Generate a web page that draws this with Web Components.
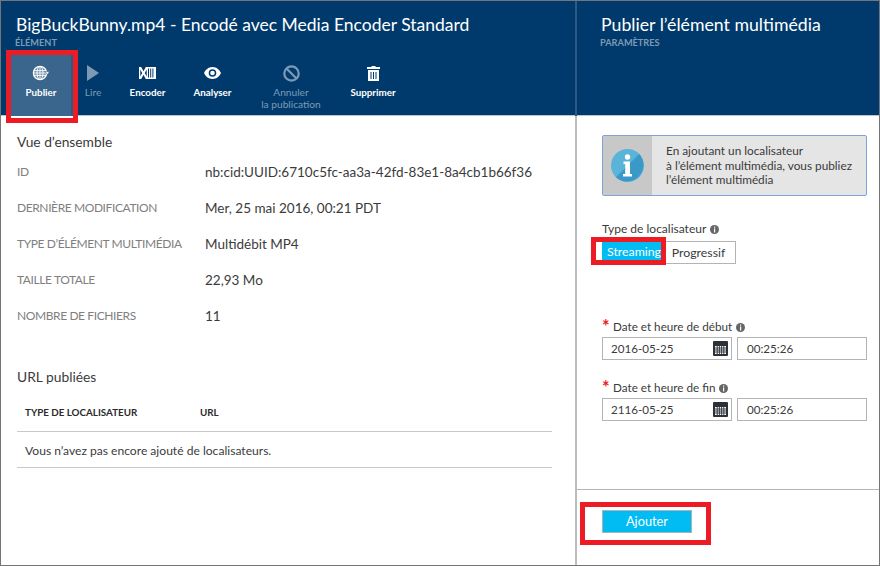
<!DOCTYPE html>
<html lang="fr">
<head>
<meta charset="utf-8">
<title>Publier</title>
<style>
  html, body { margin: 0; padding: 0; background: #fff; }
  body { font-family: Lato, "Noto Sans", sans-serif; color: #333; }
</style>
</head>
<body>
<publish-app>
  <media-blade slot="left" heading="BigBuckBunny.mp4 - Encodé avec Media Encoder Standard" sub="ÉLÉMENT">
    <command-bar slot="commands">
      <command-button label="Publier" icon="globe" active marked></command-button>
      <command-button label="Lire" icon="play" disabled></command-button>
      <command-button label="Encoder" icon="encode"></command-button>
      <command-button label="Analyser" icon="eye"></command-button>
      <command-button label="Annuler|la publication" icon="ban" disabled></command-button>
      <command-button label="Supprimer" icon="trash"></command-button>
    </command-bar>
    <asset-details></asset-details>
  </media-blade>
  <media-blade slot="right" heading="Publier l’élément multimédia" sub="PARAMÈTRES">
    <publish-form></publish-form>
  </media-blade>
</publish-app>

<script>
const ICONS = {
  globe: `<svg width="18" height="18" viewBox="0 0 18 18" fill="none" stroke="#fff" stroke-width=".9">
    <circle cx="8" cy="9" r="6.600" fill="#fff" fill-opacity=".25" stroke-width="1.300"/>
    <ellipse cx="8" cy="9" rx="3" ry="6.600"/><path d="M8 2.400v13.200M2 6.600h12M1.400 9h13.200M2 11.400h12"/>
    <path d="M13.200 7.500h4.300l-2.100 3.200z" fill="#fff" stroke="#3a658c" stroke-width=".6"/></svg>`,
  play: `<svg width="12" height="16" viewBox="0 0 12 16"><path d="M0 0l12 8-12 8z" fill="currentColor"/></svg>`,
  encode: `<svg width="17" height="12" viewBox="0 0 17 12" fill="#fff"><path d="M0 0h2.200l2.300 4.200L6.800 0H9v12H6.800L4.500 7.800 2.200 12H0zM1.300 2.600v6.800L3.200 6zM7.700 2.600L5.800 6l1.900 3.400z" fill-rule="evenodd"/><path d="M9 0h8v1.400H9zM9 10.600h8V12H9zM10 1h1.200v10H10zM12.200 1h1.200v10h-1.200zM14.400 1H17v10h-2.600z"/></svg>`,
  eye: `<svg width="17" height="12" viewBox="0 0 17 12"><path fill-rule="evenodd" fill="#fff" d="M8.500 0C12.600 0 15.700 3 17 6c-1.300 3-4.400 6-8.500 6S1.300 9 0 6c1.300-3 4.400-6 8.500-6zM8.500 2.200A3.800 3.800 0 1 0 8.500 9.800 3.800 3.800 0 1 0 8.500 2.200z"/><circle cx="8.500" cy="6" r="2.300" fill="#fff"/></svg>`,
  ban: `<svg width="17" height="17" viewBox="0 0 17 17" fill="none" stroke="currentColor" stroke-width="2.200"><circle cx="8.500" cy="8.500" r="7.200"/><path d="M3.500 3.500l10 10"/></svg>`,
  trash: `<svg width="13" height="15" viewBox="0 0 13 15"><path fill-rule="evenodd" fill="#fff" d="M4.500 0h4v1H13v2H0V1h4.500zM1 4h11v11H1zM3.500 6v7h1V6zM6 6v7h1V6zM8.500 6v7h1V6z"/></svg>`
};

class CommandButton extends HTMLElement {
  constructor() {
    super();
    const root = this.attachShadow({ mode: 'open' });
    const lines = (this.getAttribute('label') || '').split('|').join('<br>');
    root.innerHTML = `<style>
      :host { display: block; position: relative; box-sizing: border-box; height: 61px; padding: 9px 0 0; text-align: center;
        font-size: 9.800px; line-height: 12px; font-weight: 700; color: #fff; }
      :host([active]) { background: #3a658c; border-right: 2px solid #2c5a85; }
      :host([disabled]) { color: #7d9ab5; font-weight: 400; font-size: 10.200px; }
      .ico { height: 18px; margin-bottom: 4px; display: flex; align-items: center; justify-content: center; }
      .mark { position: absolute; left: -5px; right: -7px; top: -5px; bottom: -7px; border: 5px solid #ed1c24; }
    </style>
    <div class="ico">${ICONS[this.getAttribute('icon')]}</div>
    <div>${lines}</div>
    ${this.hasAttribute('marked') ? '<div class="mark"></div>' : ''}`;
  }
}
customElements.define('command-button', CommandButton);

class CommandBar extends HTMLElement {
  constructor() {
    super();
    this.attachShadow({ mode: 'open' }).innerHTML = `<style>
      :host { display: grid; grid-template-columns: 62px 40px 69px 61px 96px 68px; justify-content: start; margin-left: 10px; white-space: nowrap; }
    </style><slot></slot>`;
  }
}
customElements.define('command-bar', CommandBar);

class MediaBlade extends HTMLElement {
  constructor() {
    super();
    const root = this.attachShadow({ mode: 'open' });
    root.innerHTML = `<style>
      :host { display: flex; flex-direction: column; height: 100%; min-width: 0; }
      header { box-sizing: border-box; height: 115px; flex: none; background: #003a6c; border-bottom: 1px solid #b9c4ce; padding: 13px 0 0; }
      h1 { margin: 0 0 0 15px; font-size: 17.500px; font-weight: 400; line-height: 22px; color: #fff; white-space: nowrap; }
      .sub { margin: 1px 0 6px 14px; font-size: 9.200px; line-height: 12px; font-weight: 700; color: #7d9ab5; }
      :host([slot="right"]) h1 { margin-left: 24px; font-size: 17.700px; }
      :host([slot="right"]) .sub { margin-left: 23px; }
      main { flex: 1; min-height: 0; }
    </style>
    <header>
      <h1>${this.getAttribute('heading')}</h1>
      <div class="sub">${this.getAttribute('sub')}</div>
      <slot name="commands"></slot>
    </header>
    <main><slot></slot></main>`;
  }
}
customElements.define('media-blade', MediaBlade);

class AssetDetails extends HTMLElement {
  constructor() {
    super();
    const rows = [
      ['ID', 'nb:cid:UUID:6710c5fc-aa3a-42fd-83e1-8a4cb1b66f36'],
      ['DERNIÈRE MODIFICATION', 'Mer, 25 mai 2016, 00:21 PDT'],
      ['TYPE D’ÉLÉMENT MULTIMÉDIA', 'Multidébit MP4'],
      ['TAILLE TOTALE', '22,93 Mo'],
      ['NOMBRE DE FICHIERS', '11']
    ];
    this.attachShadow({ mode: 'open' }).innerHTML = `<style>
      :host { display: block; padding: 17px 23px 0 16px; color: #3b3b3b; }
      h2 { margin: 0; font-size: 13.800px; line-height: 18px; font-weight: 400; }
      .props { display: grid; grid-template-columns: 188px 1fr; grid-auto-rows: 36px; align-items: center; margin-top: 2px; margin-bottom: 35px; }
      .k { font-size: 12px; letter-spacing: -.4px; color: #7f7f7f; white-space: nowrap; }
      .v { font-size: 13.500px; white-space: nowrap; padding-top: 2px; }
      .th { display: grid; grid-template-columns: 175px 1fr; height: 43px; padding-top: 4px; align-items: center; padding-left: 8px; margin-top: 3px;
        font-size: 9.800px; font-weight: 700; color: #2b2b2b; border-bottom: 1px solid #c8c8c8; box-sizing: border-box; }
      .empty { height: 36px; display: flex; align-items: center; padding: 1px 0 0 8px; font-size: 12.100px; border-bottom: 1px solid #c8c8c8; box-sizing: border-box; }
    </style>
    <h2>Vue d’ensemble</h2>
    <div class="props">${rows.map(r => `<div class="k">${r[0]}</div><div class="v">${r[1]}</div>`).join('')}</div>
    <h2>URL publiées</h2>
    <div class="th"><span>TYPE DE LOCALISATEUR</span><span>URL</span></div>
    <div class="empty">Vous n’avez pas encore ajouté de localisateurs.</div>`;
  }
}
customElements.define('asset-details', AssetDetails);

class InfoDot extends HTMLElement {
  constructor() {
    super();
    this.attachShadow({ mode: 'open' }).innerHTML = `<style>
      :host { display: inline-block; width: 9px; height: 9px; vertical-align: -0.500px; margin-left: 4px; }
      svg { display: block; }
    </style><svg width="9" height="9" viewBox="0 0 9 9"><circle cx="4.500" cy="4.500" r="4.500" fill="#666"/><rect x="4" y="1.500" width="1.200" height="1.200" fill="#fff"/><rect x="4" y="3.500" width="1.200" height="4" fill="#fff"/></svg>`;
  }
}
customElements.define('info-dot', InfoDot);

class InfoBalloon extends HTMLElement {
  constructor() {
    super();
    this.attachShadow({ mode: 'open' }).innerHTML = `<style>
      :host { display: grid; grid-template-columns: 49px 1fr; box-sizing: border-box; height: 61px; background: #e5e5e5;
        border: 1px solid #7fa3d6; border-radius: 2px; font-size: 11.800px; line-height: 14.500px; color: #3b3b3b; white-space: nowrap; }
      .ico { background: #c8c8c8; display: flex; align-items: center; justify-content: center; }
      .txt { padding: 8px 0 0 14px; }
    </style>
    <div class="ico"><svg width="33" height="33" viewBox="0 0 33 33">
      <circle cx="16.500" cy="16.500" r="16.500" fill="#5ab4d9"/>
      <path d="M28.200 4.900A16.500 16.500 0 0 1 4.900 28.200z" fill="#3b99c8"/>
      <circle cx="16.500" cy="8" r="2.700" fill="#fff"/>
      <path d="M12.500 12.500h6.500v12.500h2v2.500h-9V25h2.200V15h-1.700z" fill="#fff"/></svg></div>
    <div class="txt"><slot></slot></div>`;
  }
}
customElements.define('info-balloon', InfoBalloon);

class DateField extends HTMLElement {
  constructor() {
    super();
    this.attachShadow({ mode: 'open' }).innerHTML = `<style>
      :host { display: block; }
      label { display: block; font-size: 11.700px; line-height: 14px; color: #3b3b3b; margin-bottom: 4px; white-space: nowrap; }
      .star { display: inline-block; width: 11px; color: #ed1c24; font-weight: 700; font-size: 18px; line-height: 10px; vertical-align: -2px; }
      .row { display: grid; grid-template-columns: 130px 130px; column-gap: 5px; }
      .box { box-sizing: border-box; height: 23px; border: 1px solid #b4b4b4; padding-left: 8px; font-size: 11.600px; line-height: 21px; color: #3b3b3b;
        display: flex; justify-content: space-between; align-items: center; padding-right: 3px; }
      .box.time { padding-left: 9px; }
      svg { display: block; }
    </style>
    <label><span class="star">*</span>${this.getAttribute('label')}<info-dot></info-dot></label>
    <div class="row">
      <div class="box">${this.getAttribute('date')}
        <svg width="15" height="15" viewBox="0 0 15 15"><rect width="15" height="15" rx="1" fill="#2b3138"/><rect x="2" y="5" width="11" height="8" fill="#fff"/>
          <path d="M2 7h11M2 9h11M2 11h11M4.200 5v8M6.400 5v8M8.600 5v8M10.800 5v8" stroke="#2b3138" stroke-width=".9"/></svg>
      </div>
      <div class="box time">${this.getAttribute('time')}</div>
    </div>`;
  }
}
customElements.define('date-field', DateField);

class PublishForm extends HTMLElement {
  constructor() {
    super();
    this.attachShadow({ mode: 'open' }).innerHTML = `<style>
      :host { display: flex; flex-direction: column; height: 100%; color: #3b3b3b; }
      .scroll { flex: none; height: 374px; box-sizing: border-box; padding: 19px 12px 0 25px; border-bottom: 1px solid #b4b4b4; }
      .type { margin-top: 26px; font-size: 12px; line-height: 14px; white-space: nowrap; }
      .toggle { display: flex; margin-top: 5px; position: relative; }
      .opt { box-sizing: border-box; height: 23px; font-size: 12.300px; line-height: 21px; }
      .on { width: 59px; padding-left: 5px; color: #fff; background: #00bcf2; }
      .off { width: 75px; border: 1px solid #b4b4b4; text-align: center; color: #3b3b3b; }
      .mark { position: absolute; border: 5px solid #ed1c24; box-sizing: border-box; left: -11px; top: -4px; width: 75px; height: 28px; }
      date-field.first { margin-top: 55px; }
      date-field.second { margin-top: 20px; }
      .foot { padding: 20px 0 0 25px; }
      .add { position: relative; box-sizing: border-box; width: 90px; height: 23px; background: #00bcf2; border: 1px solid #a8b4ba; color: #fff;
        font-size: 12.800px; line-height: 21px; text-align: center; }
      .add .mark { left: -23px; top: -9px; width: 131px; height: 43px; }
    </style>
    <div class="scroll">
      <info-balloon>En ajoutant un localisateur<br>à l’élément multimédia, vous publiez<br>l’élément multimédia</info-balloon>
      <div class="type">Type de localisateur<info-dot></info-dot></div>
      <div class="toggle">
        <div class="opt on">Streaming</div><div class="opt off">Progressif</div>
        <div class="mark"></div>
      </div>
      <date-field class="first" label="Date et heure de début" date="2016-05-25" time="00:25:26"></date-field>
      <date-field class="second" label="Date et heure de fin" date="2116-05-25" time="00:25:26"></date-field>
    </div>
    <div class="foot"><div class="add">Ajouter<div class="mark"></div></div></div>`;
  }
}
customElements.define('publish-form', PublishForm);

class PublishApp extends HTMLElement {
  constructor() {
    super();
    this.attachShadow({ mode: 'open' }).innerHTML = `<style>
      :host { display: grid; grid-template-columns: 574px 302px; column-gap: 2px; box-sizing: border-box; width: 880px; height: 566px;
        background: linear-gradient(#2c5a85 115px, #bdbdbd 115px); border: 1px solid #757575; overflow: hidden; }
      ::slotted(*) { background: #fff; }
    </style><slot name="left"></slot><slot name="right"></slot>`;
  }
}
customElements.define('publish-app', PublishApp);
</script>
</body>
</html>
